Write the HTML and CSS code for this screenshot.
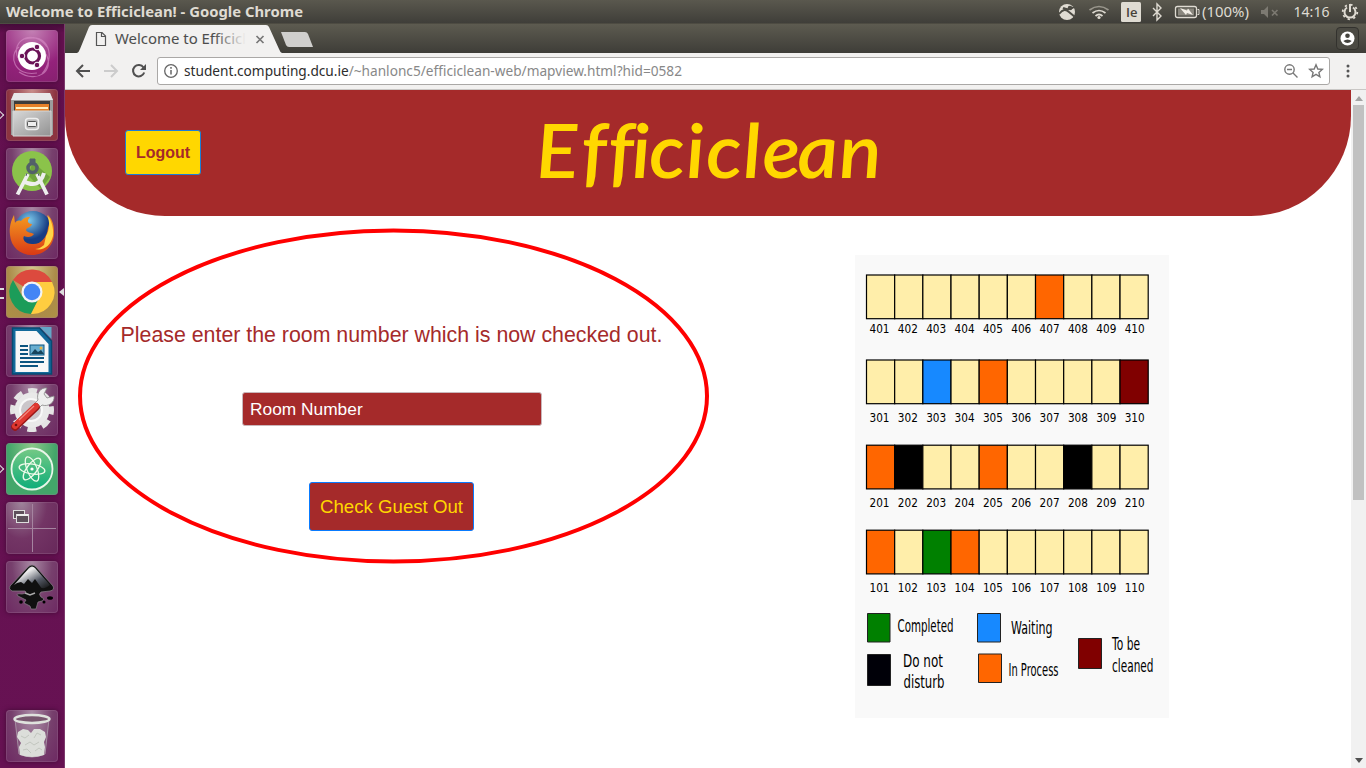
FILE: index.html
```html
<!DOCTYPE html>
<html lang="en">
<head>
<meta charset="utf-8">
<title>Welcome to Efficiclean!</title>
<link rel="stylesheet" href="styles.css">
</head>
<body>
<div class="desktop">
  <header class="panel">
    <span class="panel-title"><svg width="298" height="24"><text x="0" y="17" textLength="297" lengthAdjust="spacingAndGlyphs">Welcome to Efficiclean! - Google Chrome</text></svg></span>
    <svg class="indicators" width="316" height="24" viewBox="1050 0 316 24">
      <circle cx="1067" cy="12" r="8" fill="#dfdbd2"/>
      <path d="M1059 14c4-5 7-5 10-2l6 5M1063 8c4 2 7 2 11-1" fill="none" stroke="#4b4a43" stroke-width="2"/><circle cx="1070" cy="8" r="2.3" fill="#4b4a43"/>
      <g fill="none" stroke="#dfdbd2" stroke-width="1.7"><path d="M1089.500 10q9.500-7 19 0" stroke="#99968c"/><path d="M1092.500 13q6.500-5 13 0M1095.500 16q3.500-3 7 0"/></g><circle cx="1099" cy="17.500" r="1.600" fill="#dfdbd2"/>
      <rect x="1121" y="2" width="20" height="20" rx="1.500" fill="#dfdbd2"/>
      <text class="kbd" x="1126" y="17">Ie</text>
      <path d="M1153 8l8 8-4 4V4l4 4-8 8" fill="none" stroke="#dfdbd2" stroke-width="1.400"/>
      <rect x="1175.500" y="6.500" width="21" height="11" rx="2" fill="none" stroke="#dfdbd2" stroke-width="1.300"/><path d="M1197.500 9.500h1.500v5h-1.500" fill="none" stroke="#dfdbd2"/><rect x="1178" y="8.500" width="16" height="7" fill="#8a877e"/><path d="M1180 8l7 2.500 1-2 5 6.500-6-2-1 2z" fill="#f2eee6"/>
      <text x="1202" y="17" textLength="47" lengthAdjust="spacingAndGlyphs">(100%)</text>
      <path d="M1261 10h3l4-4v12l-4-4h-3z" fill="#7d7a72"/><path d="M1272 10l5.500 5.500M1277.500 10l-5.500 5.500" stroke="#7d7a72" stroke-width="1.600"/>
      <text x="1293.500" y="17" textLength="36" lengthAdjust="spacingAndGlyphs">14:16</text>
      <g fill="none" stroke="#dfdbd2"><path d="M1347 7.500a5.500 5.500 0 1 0 6 0" stroke-width="2"/><circle cx="1350" cy="12" r="7.300" stroke-width="1.800" stroke-dasharray="2.300 3.434"/><path d="M1350 4v8" stroke-width="2"/></g>
    </svg>
  </header>

  <nav class="launcher">
    <div class="tile ubuntu"><svg viewBox="0 0 52 52"><g fill="none" stroke="#d58cc5" stroke-width="1.200" opacity=".65"><path d="M12 28C4 10 28-2 41 17M40 24c9 17-9 30-27 18M19 9C43 2 50 27 36 44M31 43C8 47 2 25 13 17"/></g><circle cx="26" cy="26" r="14" fill="#fff"/><circle cx="26.500" cy="26" r="7" fill="none" stroke="#6b1357" stroke-width="3.200"/><g fill="#6b1357" stroke="#fff" stroke-width="1"><circle cx="16" cy="26" r="2.800"/><circle cx="31" cy="17" r="2.800"/><circle cx="31" cy="35" r="2.800"/></g></svg></div>
    <div class="tile files running"><svg viewBox="0 0 52 52"><defs><linearGradient id="drawer" x2="1" y2="1"><stop stop-color="#d8d8d8"/><stop offset="1" stop-color="#929292"/></linearGradient></defs><path d="M8 4h36l3 7v35H5V11z" fill="#9c9c9c"/><path d="M8 4h36l3 7H5z" fill="#e8e8e8"/><path d="M8 12h36v11H8z" fill="#3c3c3c"/><path d="M9 15h34v7H9z" fill="#e58129"/><path d="M10 18h32v2H10z" fill="#fff0c0"/><path d="M7 22h38v25H7z" fill="url(#drawer)" stroke="#d5d5d5"/><rect x="19.500" y="29.500" width="13" height="11" rx="3" fill="#bbb" stroke="#eee" stroke-width="1.500"/><rect x="21.500" y="32.500" width="9" height="5" rx="1" fill="#eee" stroke="#555"/></svg></div>
    <div class="tile"><svg viewBox="0 0 52 52"><circle cx="26" cy="23" r="20" fill="#8bc34a"/><path d="M27 14l17 15-9 12-13-14z" fill="#70a43d"/><path d="M22 26L11.500 46.500M31 26l10 20.500" stroke="#eee" stroke-width="3.800"/><path d="M17 33q16 9 21-8" fill="none" stroke="#eee" stroke-width="4"/><circle cx="26.500" cy="20" r="4.500" fill="none" stroke="#536169" stroke-width="3.500"/><path d="M24 11h5v5h-5zM21 25l-1 3M32 25l1 3" fill="#536169" stroke="#536169"/></svg></div>
    <div class="tile"><svg viewBox="0 0 52 52"><defs><radialGradient id="globe" cx=".4" cy=".25"><stop stop-color="#7bc9ec"/><stop offset="1" stop-color="#173c83"/></radialGradient><linearGradient id="fox" x2="0" y2="1"><stop stop-color="#f49b20"/><stop offset="1" stop-color="#d93915"/></linearGradient></defs><circle cx="27" cy="23" r="19" fill="url(#globe)"/><path d="M8 8c-3 6-5 12-4 20 1 12 10 20 22 20 13 0 23-10 22-24 0-8-3-13-6-16 2 7 1 10 0 13-1 10-8 17-16 16-7 0-10-5-8-8 4 2 8 1 10-2-3-2-7-1-8-4 1-3 5-2 6-6-5 0-5-4-2-7-5 0-7 2-9 4-3-1-5 0-6 2z" fill="url(#fox)"/><path d="M41 8c3 7 3 14-1 21l-2 9c-4 3-6 4-9 4 9 2 16-4 18-13 1-8-2-17-6-21z" fill="#ffd447"/></svg></div>
    <div class="tile chrome focused"><svg viewBox="0 0 52 52"><path d="M26 26L7 14A22.300 22.300 0 0 1 46 16H26z" fill="#dc4a3e"/><path d="M7 14A22 22 0 0 0 25 48L34 31 26 26 16 30z" fill="#1c9c59"/><path d="M46 16a22 22 0 0 1-21 32l9-18-3-14z" fill="#ffcd40"/><circle cx="26" cy="26" r="10.500" fill="#f4f4f4"/><circle cx="26" cy="26" r="8.300" fill="#4385f5"/></svg></div>
    <div class="tile"><svg viewBox="0 0 52 52"><path d="M6.500 3h27l12 13v33h-39z" fill="#136a9b" stroke="#074a72" stroke-width="1.500"/><path d="M34 2h11.500v12z" fill="#63a6c7"/><path d="M9.500 6h21l12 13v28h-33z" fill="#f8f8f8"/><path d="M14 21h8M14 25h8M14 29h8M14 33h24M14 37h24M14 41h18" stroke="#0d5580" stroke-width="2"/><rect x="24" y="20" width="14" height="10" fill="#68aed0" stroke="#0d5580"/><path d="M25 29l4-5 3 3 3-2 3 4z" fill="#16445c"/><circle cx="35" cy="23" r="1.500" fill="#e8b341"/></svg></div>
    <div class="tile"><svg viewBox="0 0 52 52"><circle cx="26" cy="26" r="19.500" fill="none" stroke="#e4e4e4" stroke-width="5" stroke-dasharray="9 6.315" stroke-dashoffset="4.500"/><circle cx="26" cy="26" r="17.500" fill="#e9e9e9"/><circle cx="25" cy="26" r="11" fill="#cbc6ca" stroke="#f8f8f8" stroke-width="2"/><path d="M27 21l5-5c-2-7 3-13 9-12l-3 6 3 4 7-2c1 7-6 11-12 9l-5 5z" fill="#eee" stroke="#888" stroke-width=".8"/><path d="M9 43L30 23" stroke="#9a1616" stroke-width="7.500" stroke-linecap="round"/><path d="M9 42L30 22" stroke="#df3831" stroke-width="6" stroke-linecap="round"/><path d="M13 36l15-14" stroke="#f18a80" stroke-width="1.200"/><circle cx="10" cy="41" r="1.300" fill="#75110e"/></svg></div>
    <div class="tile atom running"><svg viewBox="0 0 52 52"><defs><linearGradient id="green" x2="0" y2="1"><stop stop-color="#75c985"/><stop offset="1" stop-color="#0ead79"/></linearGradient></defs><circle cx="26" cy="26" r="20.500" fill="url(#green)" stroke="#e9f6e9" stroke-width="1.800"/><g fill="none" stroke="#effbea" stroke-width="1.300"><ellipse cx="26" cy="26" rx="13" ry="5" transform="rotate(9 26 26)"/><ellipse cx="26" cy="26" rx="13" ry="5" transform="rotate(68 26 26)"/><ellipse cx="26" cy="26" rx="13" ry="5" transform="rotate(127 26 26)"/></g><circle cx="26" cy="26" r="1.600" fill="#fff"/></svg></div>
    <div class="tile workspaces"><svg viewBox="0 0 52 52"><path d="M26.500 2v48M2 26.500h48" stroke="#a584a0"/><g fill="#5d505b" stroke="#ddd"><rect x="7.500" y="8.500" width="11" height="8"/><rect x="10.500" y="12.500" width="12" height="8"/></g><path d="M11 13h11" stroke="#eee" stroke-width="2"/></svg></div>
    <div class="tile"><svg viewBox="0 0 52 52"><defs><linearGradient id="ink" x2="1" y2="1"><stop stop-color="#777"/><stop offset=".3" stop-color="#eee"/><stop offset=".65" stop-color="#555a66"/><stop offset="1" stop-color="#111"/></linearGradient></defs><path d="M4 25L22 6q4-4 8 0l17 19q2 4-3 5l-9 1q-3 2 0 5 5 2 1 4l-4 1-2 7h-5l-1-3-6-3 2-3-8-4q-3-3 4-2 6-1 3-3L6 30q-4-2-2-5z" fill="#101010" stroke="#8b818b" stroke-width=".7"/><path d="M8 24L23 7q3-3 6 0l15 17q-8 6-10 1l-5-7-3 4-4-4-4 5-3-2-4 1z" fill="url(#ink)"/><path d="M19 32l5 2 5-2" stroke="#aaa" stroke-width="1.500" fill="none"/><ellipse cx="44" cy="37" rx="3" ry="1.800"/><circle cx="15" cy="41" r="1.800"/><circle cx="38" cy="41" r="1.500"/></svg></div>
    <div class="tile trash"><svg viewBox="0 0 52 52"><path d="M9 9l4 35q13 6 26 0l4-35" fill="#c7bcc5" fill-opacity=".18" stroke="#a68fa3"/><path d="M14 45l-1-8 2-4-4-6 1-5 5-3 5 1 3 3 3-4 6 0 5 3 1 5-2 5 1 5-1 8q-12 4-24 0z" fill="#dcdeda"/><path d="M15 26l4 2 4-3M28 28l3-5 4 2M19 35l5-3 4 3 5-3M17 40l4-1 4 4M29 41l4-3 3 2" fill="none" stroke="#c2c6bf"/><ellipse cx="26" cy="9" rx="17.500" ry="4" fill="#79576f" stroke="#dfe2dd" stroke-width="2.500"/></svg></div>
  </nav>

  <main class="browser">
    <div class="tabstrip">
      <svg width="260" height="29" viewBox="65 24 260 29">
        <defs><linearGradient id="fade" gradientUnits="userSpaceOnUse" x1="214" x2="246"><stop stop-color="#4d4d4d"/><stop offset="1" stop-color="#f2f1f0"/></linearGradient></defs>
        <path d="M77 53q2-1 3-4l9-22q1-2 3-2h174q2 0 3 2l10 22q1 3 3 4z" fill="#f2f1f0"/>
        <path d="M96.500 32.500h5.500l3.500 3.500v9.500h-9zM101.500 32.500v4h4" fill="none" stroke="#555" stroke-width="1.200"/>
        <text class="tab-text" x="115" y="44" fill="url(#fade)" textLength="131" lengthAdjust="spacingAndGlyphs">Welcome to Efficicl</text>
        <path d="M256.500 36l7 7M263.500 36l-7 7" stroke="#777" stroke-width="1.700"/>
        <path d="M281 32h24q2 0 3 2l5 13h-24q-2 0-3-2z" fill="#d0cfcd"/>
      </svg>
      <span class="profile"><svg width="22" height="22"><circle cx="10.500" cy="10.500" r="7" fill="#fff"/><circle cx="10.500" cy="7.800" r="2.300" fill="#44433e"/><path d="M6.300 13q4.200-3 8.400 0-4.200 4-8.400 0z" fill="#44433e"/></svg></span>
    </div>
    <div class="toolbar">
      <svg class="nav-icons" width="84" height="28" viewBox="70 57 84 28" fill="none" stroke="#505050" stroke-width="2"><path d="M90 71H77.500M83 65l-6 6 6 6"/><path d="M104 71h12.500M111 65l6 6-6 6" stroke="#ccc"/><path d="M143.500 67.500a5.700 5.700 0 1 0 .700 5"/><path d="M146 64v6h-6z" fill="#505050" stroke="none"/></svg>
      <div class="address">
        <svg class="info" width="16" height="16" fill="none" stroke="#666"><circle cx="8" cy="8" r="6.300" stroke-width="1.300"/><path d="M8 7v4.500M8 4v1.800" stroke-width="1.500"/></svg>
        <svg class="url" width="520" height="26"><text x="0" y="18" textLength="498" lengthAdjust="spacingAndGlyphs">student.computing.dcu.ie<tspan>/~hanlonc5/efficiclean-web/mapview.html?hid=0582</tspan></text></svg>
        <svg class="actions" width="44" height="20" viewBox="1281 61 44 20" fill="none" stroke="#777" stroke-width="1.400"><circle cx="1289.500" cy="69.500" r="4.700"/><path d="M1293 73l4.500 4.500M1287 69.500h5"/><path d="M1316 64.800l1.800 4.200 4.500.4-3.400 3 1 4.400-3.900-2.400-3.900 2.400 1-4.400-3.400-3 4.500-.4z"/></svg>
      </div>
      <svg class="menu" width="6" height="16" fill="#555"><circle cx="3" cy="3" r="1.500"/><circle cx="3" cy="8" r="1.500"/><circle cx="3" cy="13" r="1.500"/></svg>
    </div>
    <div class="viewport">
      <div class="page">
        <header class="banner">
          <button class="logout">Logout</button>
          <h1 class="brand"><svg width="344" height="90" viewBox="537 105 344 90"><text transform="translate(538 178) skewX(3) scale(1.06 1)" x="-1 42 67.500 89.500 105.700 140.500 159.400 194.300 212.500 245.500 284.800">Efficiclean</text></svg></h1>
        </header>
        <div class="content">
          <form class="checkout">
            <p class="prompt">Please enter the room number which is now checked out.</p>
            <input class="room" type="text" placeholder="Room Number" aria-label="Room Number">
            <button class="submit" type="button">Check Guest Out</button>
          </form>
          <svg class="map" id="map" width="314" height="463" viewBox="855 255 314 463">
            <g id="rooms"></g>
            <g stroke="#222" stroke-width="1"><path d="M867.500 613.500h22.500v28.500h-22.500z" fill="#008000"/><path d="M867.500 654.500h23v31h-23z" fill="#000008"/><path d="M977.500 613.500h23v28.500h-23z" fill="#1789ff"/><path d="M978.500 654h23v28.500h-23z" fill="#f60"/><path d="M1078.500 638.500h23v30h-23z" fill="maroon"/></g>
            <g class="legend">
              <text x="897.500" y="631.500" textLength="56" lengthAdjust="spacingAndGlyphs">Completed</text>
              <text x="903" y="667" textLength="40" lengthAdjust="spacingAndGlyphs">Do not</text>
              <text x="903.500" y="687.500" textLength="41" lengthAdjust="spacingAndGlyphs">disturb</text>
              <text x="1011" y="634" textLength="41.500" lengthAdjust="spacingAndGlyphs">Waiting</text>
              <text x="1008.500" y="675.500" textLength="50" lengthAdjust="spacingAndGlyphs">In Process</text>
              <text x="1112" y="650" textLength="28" lengthAdjust="spacingAndGlyphs">To be</text>
              <text x="1112" y="671.500" textLength="41.500" lengthAdjust="spacingAndGlyphs">cleaned</text>
            </g>
          </svg>
        </div>
        <svg class="highlight" width="632" height="335"><ellipse cx="315.500" cy="168" rx="313.500" ry="165.500"/></svg>
      </div>
      <div class="scrollbar"><span class="arrow up"></span><span class="thumb"></span><span class="arrow down"></span></div>
    </div>
  </main>
</div>
<script src="rooms.js"></script>
</body>
</html>
```
FILE: styles.css
```css
* { box-sizing: border-box; }
body { margin: 0; overflow: hidden; font-family: "Liberation Sans", Arial, sans-serif; }
svg { display: block; overflow: visible; }
.desktop { display: grid; grid-template: 24px 744px / 65px 1301px; width: 1366px; height: 768px; }
.panel { grid-column: 1 / 3; display: flex; justify-content: space-between; background: linear-gradient(#5a584e, #3f3e39); border-bottom: 1px solid #4d4b42; }
.panel-title { padding-left: 6px; }
.panel text { font-family: "Noto Sans", sans-serif; font-size: 14px; fill: #dfdbd2; }
.panel .panel-title text { font-weight: 700; font-size: 13.5px; }
.panel .kbd { fill: #454139; font-family: "Open Sans", sans-serif; font-size: 13px; font-weight: 600; }

.launcher { display: flex; flex-direction: column; gap: 7px; padding: 6px 0 6px 6px; background: linear-gradient(#450c3a, #63104f 9px, #651151 50%, #671253); border-right: 1px solid #7c3a6c; }
.tile { position: relative; flex: none; width: 52px; height: 52px; border-radius: 4px; background: radial-gradient(ellipse at 50% 0, #a98aa5, #77406d 55%, #6d2962); box-shadow: inset 0 0 0 1px #a273994d, 0 0 5px #420a36; }
.ubuntu { background: radial-gradient(circle at 50% 0, #c481b5, #94227b 65%, #86206f); }
.files { background: radial-gradient(ellipse at 50% 0, #c98e8b, #8c3440 65%); }
.chrome { background: radial-gradient(ellipse at 50% 0, #d3c689, #ab8b49 65%, #ad9145); }
.atom { background: radial-gradient(ellipse at 50% 0, #8bc889, #43a66a 65%); }
.workspaces { background: radial-gradient(ellipse at 30% 0, #9f859b, #733565 50%, #67285a); }
.trash { margin-top: auto; }
.running::before { content: ""; position: absolute; left: -9px; top: 23px; width: 5px; height: 5px; border: solid #ddd; border-width: 1px 1px 0 0; transform: rotate(45deg); }
.focused::before { content: ""; position: absolute; left: -6px; top: 22px; width: 4px; height: 7px; border: solid #ddd; border-width: 2px 0; }
.focused::after { content: ""; position: absolute; right: -6px; top: 22px; border: 4px solid transparent; border-left: 0; border-right: 5px solid #ddd; }

.browser { display: flex; flex-direction: column; }
.tabstrip { display: flex; justify-content: space-between; height: 29px; background: linear-gradient(#5d5b50, #3e3d38); }
.tab-text { font: 14.5px "Noto Sans", sans-serif; }
.profile { margin: 3px 7px 0 0; width: 23px; height: 23px; border: 1px solid #33322e; border-radius: 4px; background: #4b4a43; }
.toolbar { display: flex; align-items: center; height: 37px; padding: 0 15px 1px 5px; background: #f2f1f0; border-bottom: 1px solid #c9c7c5; }
.address { display: flex; align-items: center; width: 1173px; height: 28px; margin-left: 3px; padding: 0 4px 0 5px; border: 1px solid #aaa8a6; border-radius: 3px; background: #fff; }
.url { margin-left: 5px; font: 14px "Noto Sans", sans-serif; fill: #2d2d2d; }
.url tspan { fill: #888; }
.actions { margin-left: auto; }
.menu { margin-left: auto; }

.viewport { display: flex; height: 678px; background: #fff; }
.page { position: relative; width: 1286px; }
.banner { display: grid; grid-template-columns: 472px 1fr; height: 126px; background: brown; border-radius: 0 0 100px 100px; }
.logout { width: 76px; height: 45px; margin: 40px 0 0 60px; padding: 0; border: 1px solid #1b7ed8; border-radius: 3px; background: gold; color: brown; font: 700 16px "Liberation Sans", Arial, sans-serif; }
.brand { margin: 15px 0 0; font-weight: 400; }
.brand text { font: italic 600 75px Lato, sans-serif; fill: gold; font-variant-ligatures: none; }
.content { display: flex; align-items: flex-start; }
.checkout { display: flex; flex-direction: column; align-items: center; width: 653px; padding-top: 106px; }
.prompt { margin: 0; height: 26px; line-height: 26px; color: brown; font-size: 21.33px; white-space: nowrap; }
.room { width: 300px; height: 34px; margin: 44px 0 0; padding: 0 7.5px; border: 1px solid #c9b7bb; border-radius: 3px; background: brown; color: #fff; font: 17.33px "Liberation Sans", Arial, sans-serif; }
.room::placeholder { color: #fff; opacity: 1; }
.submit { width: 165px; height: 49px; margin-top: 56px; padding: 0; border: 1px solid #087bff; border-radius: 3px; background: brown; color: gold; font: 18.67px "Liberation Sans", Arial, sans-serif; }
.map { margin: 39px 0 0 137px; background: #f9f9f9; font-family: "DejaVu Sans", sans-serif; }
.room-label { font-size: 12px; }
.legend { font-size: 18px; }
.highlight { position: absolute; left: 13px; top: 138px; pointer-events: none; }
.highlight ellipse { fill: none; stroke: red; stroke-width: 4; }
.scrollbar { display: flex; flex-direction: column; align-items: center; width: 15px; background: #f1f1f1; }
.arrow { border: 4px solid transparent; }
.up { margin-top: 2px; border-bottom: 5px solid #a3a3a3; }
.down { margin: auto 0 1px; border-top: 5px solid #505050; }
.thumb { width: 11px; height: 395px; margin-top: 4px; background: #c1c1c1; }
```
FILE: rooms.js
```javascript
const svgNS = "http://www.w3.org/2000/svg";
const floors = [
  { floor: 4, top: 275, label: 333.4, states: { 7: "#f60" } },
  { floor: 3, top: 360, label: 421.8, states: { 3: "#1789ff", 5: "#f60", 10: "maroon" } },
  { floor: 2, top: 445.2, label: 507.4, states: { 1: "#f60", 2: "#000", 5: "#f60", 8: "#000" } },
  { floor: 1, top: 530.2, label: 591.8, states: { 1: "#f60", 3: "green", 4: "#f60" } }
];
function add(name, attributes, text) {
  const node = document.createElementNS(svgNS, name);
  for (const key in attributes) node.setAttribute(key, attributes[key]);
  if (text) node.textContent = text;
  document.getElementById("rooms").appendChild(node);
}
for (const row of floors) {
  for (let room = 1; room <= 10; room++) {
    const x = 866.5 + (room - 1) * 28.17;
    add("rect", { x, y: row.top, width: 28.17, height: 43.7, fill: row.states[room] || "#ffeeaa", stroke: "#000", "stroke-width": 1.2 });
    add("text", { class: "room-label", x: 869.5 + (room - 1) * 28.35, y: row.label, textLength: 20, lengthAdjust: "spacingAndGlyphs" }, String(row.floor * 100 + room));
  }
}
```
